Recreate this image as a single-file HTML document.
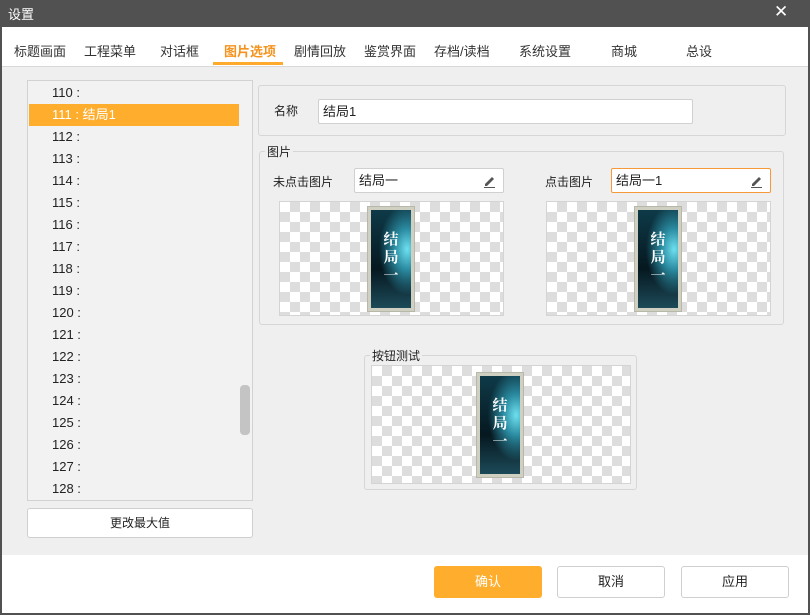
<!DOCTYPE html>
<html><head><meta charset="utf-8"><style>
*{margin:0;padding:0;box-sizing:border-box}
body{width:810px;height:615px;position:relative;overflow:hidden;background:#fff;font-family:"Liberation Sans","Noto Sans CJK SC",sans-serif;font-size:12px;color:#222}
.a{position:absolute}
.chk{background-color:#fff;background-image:linear-gradient(45deg,#ddd 25%,transparent 25%,transparent 75%,#ddd 75%),linear-gradient(45deg,#ddd 25%,transparent 25%,transparent 75%,#ddd 75%);background-size:20px 20px;background-position:0 0,10px 10px;border:1px solid #d4d4d4}
.card{position:absolute;width:48px;height:106px;background:#cfcfc2;border:1px solid #b8b8a8;padding:3px}
.card div{width:100%;height:100%;background:radial-gradient(ellipse at 90% 40%,#6ee0f0 0%,#2a8aa0 25%,transparent 55%),linear-gradient(180deg,#0e3a48,#061820 60%,#1c4a58);color:#fff;font-family:"Noto Serif CJK SC",serif;font-weight:bold;font-size:15px;line-height:18px;text-align:center;padding-top:20px;width:40px}
.inp{position:absolute;background:#fff;border:1px solid #d0d0d0;border-radius:2px;height:25px;line-height:23px;padding-left:4px;font-size:13px}
.gb{position:absolute;border:1px solid #d6d6d6;border-radius:3px}
.btn{position:absolute;border:1px solid #cfcfcf;border-radius:3px;background:#fff;text-align:center;font-size:13px}
.li{position:absolute;left:52px;font-size:13px;line-height:14px}
.pen{position:absolute;right:7px;top:5px;width:14px;height:14px}
</style></head><body>
<div class="a" style="left:0;top:0;width:810px;height:27px;background:#515151"></div>
<div class="a" style="left:8px;top:4px;color:#fff;font-size:13px">设置</div>
<div class="a" style="left:774px;top:2px;color:#fff;font-size:17px">✕</div>
<div class="a" style="left:0;top:27px;width:2px;height:588px;background:#515151"></div>
<div class="a" style="right:0;top:27px;width:2px;height:588px;background:#515151"></div>
<div class="a" style="left:0;bottom:0;width:810px;height:2px;background:#515151"></div>
<div class="a" style="left:2px;top:66px;width:806px;height:1px;background:#d8d8d8"></div>
<div class="a" style="left:2px;top:67px;width:806px;height:488px;background:#efefef"></div>
<div class="a" style="top:41px;left:0;width:810px;font-size:13px;color:#333">
<span class="a" style="left:14px">标题画面</span><span class="a" style="left:84px">工程菜单</span><span class="a" style="left:160px">对话框</span><span class="a" style="left:224px;color:#f4931e;font-weight:bold">图片选项</span><span class="a" style="left:294px">剧情回放</span><span class="a" style="left:364px">鉴赏界面</span><span class="a" style="left:434px">存档/读档</span><span class="a" style="left:519px">系统设置</span><span class="a" style="left:611px">商城</span><span class="a" style="left:686px">总设</span></div>
<div class="a" style="left:213px;top:62px;width:70px;height:3px;background:#ffaa2a"></div>

<div class="a" style="left:27px;top:80px;width:226px;height:421px;background:#f2f2f2;border:1px solid #d2d2d2"></div>
<div class="a" style="left:29px;top:104px;width:210px;height:22px;background:#ffad2c"></div>
<div class="li" style="top:86px">110 :</div>
<div class="li" style="top:108px;color:#fff">111 : 结局1</div>
<div class="li" style="top:130px">112 :</div><div class="li" style="top:152px">113 :</div><div class="li" style="top:174px">114 :</div><div class="li" style="top:196px">115 :</div><div class="li" style="top:218px">116 :</div><div class="li" style="top:240px">117 :</div><div class="li" style="top:262px">118 :</div><div class="li" style="top:284px">119 :</div><div class="li" style="top:306px">120 :</div><div class="li" style="top:328px">121 :</div><div class="li" style="top:350px">122 :</div><div class="li" style="top:372px">123 :</div><div class="li" style="top:394px">124 :</div><div class="li" style="top:416px">125 :</div><div class="li" style="top:438px">126 :</div><div class="li" style="top:460px">127 :</div><div class="li" style="top:482px">128 :</div>
<div class="a" style="left:240px;top:385px;width:10px;height:50px;background:#c4c4c4;border-radius:4px"></div>
<div class="btn" style="left:27px;top:508px;width:226px;height:30px;line-height:28px;font-size:12px">更改最大值</div>

<div class="gb" style="left:258px;top:85px;width:528px;height:51px"></div>
<div class="a" style="left:274px;top:102px;font-size:12px">名称</div>
<div class="inp" style="left:318px;top:99px;width:375px">结局1</div>

<div class="gb" style="left:259px;top:151px;width:525px;height:174px"></div>
<div class="a" style="left:265px;top:143px;background:#efefef;padding:0 2px;font-size:12px">图片</div>
<div class="a" style="left:273px;top:173px">未点击图片</div>
<div class="inp" style="left:354px;top:168px;width:150px">结局一<svg class="pen" viewBox="0 0 14 14"><path d="M3 10 L10 3 L12 5 L5 12 L3 12Z" fill="#555"/><rect x="2" y="13" width="11" height="1" fill="#555"/></svg></div>
<div class="a chk" style="left:279px;top:201px;width:225px;height:115px"></div>
<div class="card" style="left:367px;top:206px"><div>结<br>局<br>一</div></div>
<div class="a" style="left:545px;top:173px">点击图片</div>
<div class="inp" style="left:611px;top:168px;width:160px;border-color:#f49a3a">结局一1<svg class="pen" viewBox="0 0 14 14"><path d="M3 10 L10 3 L12 5 L5 12 L3 12Z" fill="#555"/><rect x="2" y="13" width="11" height="1" fill="#555"/></svg></div>
<div class="a chk" style="left:546px;top:201px;width:225px;height:115px"></div>
<div class="card" style="left:634px;top:206px"><div>结<br>局<br>一</div></div>

<div class="gb" style="left:364px;top:355px;width:273px;height:135px"></div>
<div class="a" style="left:370px;top:347px;background:#efefef;padding:0 2px">按钮测试</div>
<div class="a chk" style="left:371px;top:365px;width:260px;height:119px"></div>
<div class="card" style="left:476px;top:372px"><div>结<br>局<br>一</div></div>

<div class="btn" style="left:434px;top:566px;width:108px;height:32px;line-height:30px;background:#ffad2c;border-color:#ffad2c;color:#fff">确认</div>
<div class="btn" style="left:557px;top:566px;width:108px;height:32px;line-height:30px">取消</div>
<div class="btn" style="left:681px;top:566px;width:108px;height:32px;line-height:30px">应用</div>
</body></html>
